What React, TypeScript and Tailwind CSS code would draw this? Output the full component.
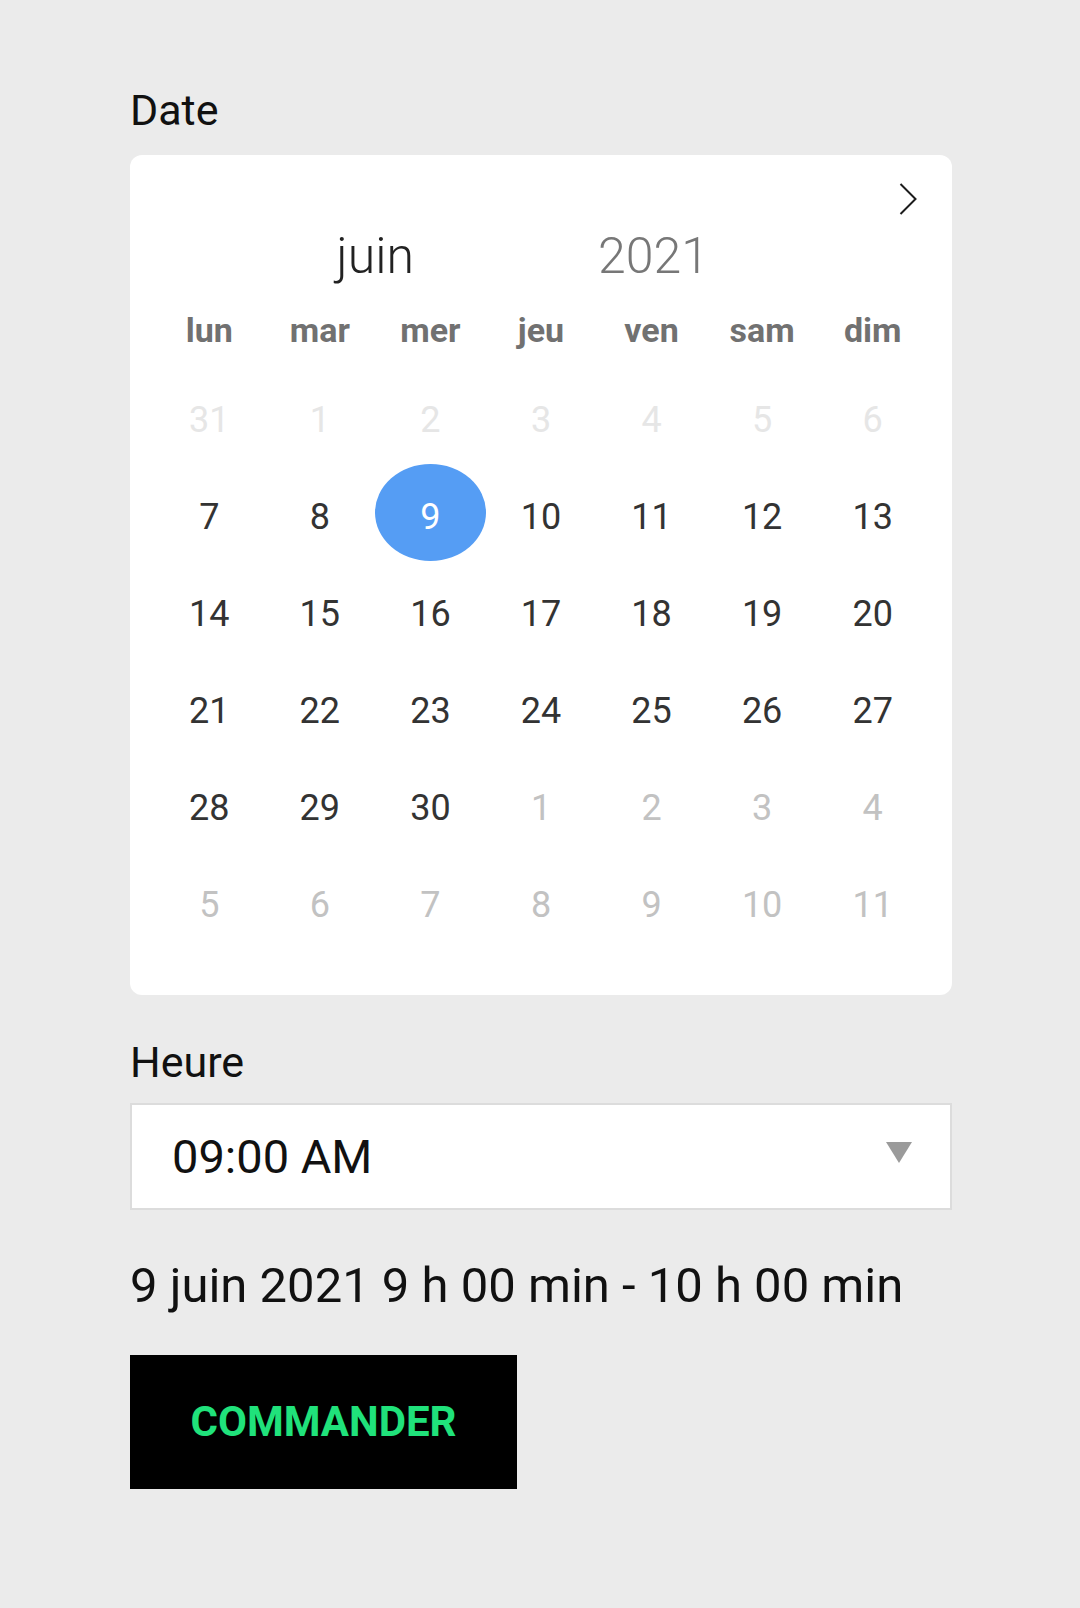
const WEEKDAYS = ["lun", "mar", "mer", "jeu", "ven", "sam", "dim"];

type Day = { n: number; kind: "prev" | "cur" | "next" };

function buildDays(): Day[] {
  const days: Day[] = [{ n: 31, kind: "prev" }];
  for (let i = 1; i <= 6; i++) days.push({ n: i, kind: "prev" });
  for (let i = 7; i <= 30; i++) days.push({ n: i, kind: "cur" });
  for (let i = 1; i <= 11; i++) days.push({ n: i, kind: "next" });
  return days;
}

function Chevron() {
  return (
    <svg width="18" height="32" viewBox="0 0 18 32" fill="none">
      <polyline
        points="1.5,1 16.5,16 1.5,31"
        stroke="#1c1c1c"
        strokeWidth="2"
        strokeLinejoin="miter"
      />
    </svg>
  );
}

function Calendar() {
  const days = buildDays();
  return (
    <div className="w-full rounded-[12px] bg-white px-6 pt-[28px] pb-[46px]">
      <div className="flex justify-end pr-[11px]">
        <Chevron />
      </div>

      <div className="mt-[16px] grid grid-cols-7 text-[50px] font-light leading-none">
        <div className="col-span-2 col-start-2 text-center text-[#222]">juin</div>
        <div className="col-span-3 col-start-4 pl-[4px] text-center text-[#777]">2021</div>
      </div>

      <div className="mt-[32px] grid grid-cols-7 text-[34px] font-bold leading-none text-[#717171]">
        {WEEKDAYS.map((d) => (
          <div key={d} className="text-center">
            {d}
          </div>
        ))}
      </div>

      <div className="mt-[20px] grid grid-cols-7">
        {days.map((d, i) => {
          const selected = d.kind === "cur" && d.n === 9;
          const color = selected
            ? "text-white"
            : d.kind === "prev"
              ? "text-[#e6e6e6]"
              : d.kind === "next"
                ? "text-[#c2c2c2]"
                : "text-[#333]";
          return (
            <div
              key={i}
              className={`flex h-[97px] items-center justify-center ${
                selected ? "rounded-[50%] bg-[#559df4]" : ""
              }`}
            >
              <span className={`pt-2 text-[36px] leading-none ${color}`}>{d.n}</span>
            </div>
          );
        })}
      </div>
    </div>
  );
}

export default function App() {
  return (
    <div
      className="min-h-[1608px] w-full bg-[#ebebeb]"
      style={{ fontFamily: "Roboto, 'Liberation Sans', sans-serif" }}
    >
      <div className="ml-[130px] w-[822px] pt-[89px]">
        <div className="text-[43px] leading-none text-[#111]">Date</div>

        <div className="mt-[23px]">
          <Calendar />
        </div>

        <div className="mt-[46px] text-[43px] leading-none text-[#111]">Heure</div>

        <div className="mt-[19px] flex h-[107px] items-center justify-between border-2 border-[#dcdcdc] bg-white pl-[40px] pr-[38px]">
          <span className="text-[47px] leading-none text-[#111]">09:00 AM</span>
          <svg width="26" height="21" viewBox="0 0 26 21" className="-mt-[9px]">
            <polygon points="0,0 26,0 13,21" fill="#9b9b9b" />
          </svg>
        </div>

        <div className="mt-[51px] text-[49px] leading-none text-[#111]">
          9 juin 2021 9 h 00 min - 10 h 00 min
        </div>

        <button className="mt-[45px] flex h-[134px] w-[387px] items-center justify-center bg-black text-[42px] font-bold leading-none text-[#20e27b]">
          COMMANDER
        </button>
      </div>
    </div>
  );
}
